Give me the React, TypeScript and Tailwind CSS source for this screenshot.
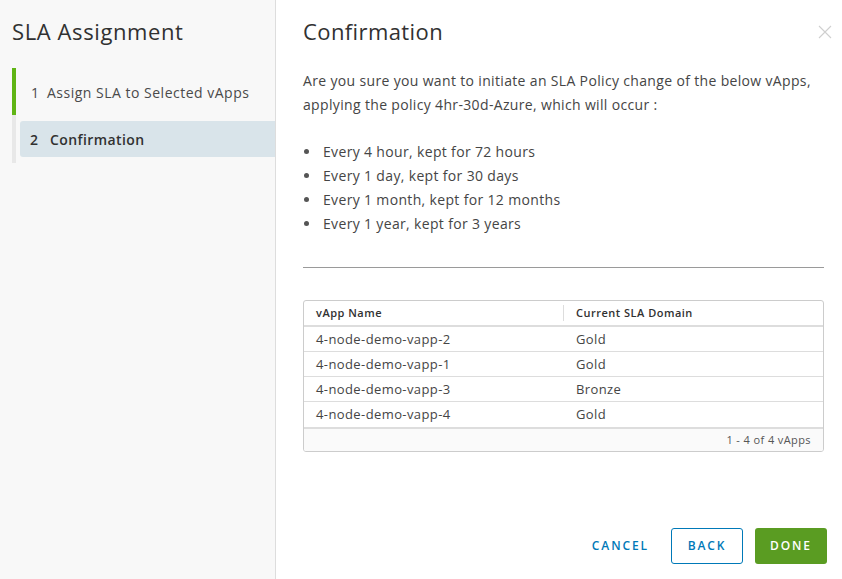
import React from "react";

const rows = [
  ["4-node-demo-vapp-2", "Gold"],
  ["4-node-demo-vapp-1", "Gold"],
  ["4-node-demo-vapp-3", "Bronze"],
  ["4-node-demo-vapp-4", "Gold"],
];

const bullets = [
  "Every 4 hour, kept for 72 hours",
  "Every 1 day, kept for 30 days",
  "Every 1 month, kept for 12 months",
  "Every 1 year, kept for 3 years",
];

export default function App() {
  return (
    <div
      className="flex w-[842px] h-[579px] bg-white text-[#333] overflow-hidden"
      style={{ fontFamily: '"Open Sans", "Noto Sans", sans-serif' }}
    >
      {/* Left panel */}
      <div className="w-[276px] shrink-0 bg-[#f8f8f8] border-r border-[#ddd] flex flex-col">
        <div className="pl-[12px] pt-[16px] h-[68px] text-[22px] leading-[30px] tracking-[0.6px] text-[#313131] font-normal">
          SLA Assignment
        </div>
        <div className="flex flex-col pl-[12px]">
          <div className="flex">
            <div className="w-[4px] bg-[#60b515]" />
            <div className="flex items-center h-[47px] pt-[1px] pl-[15px] text-[14px] tracking-[0.5px] text-[#4a4a4a]">
              <span className="w-[16px]">1</span>
              <span>Assign SLA to Selected vApps</span>
            </div>
          </div>
          <div className="flex">
            <div className="w-[4px] bg-[#e8e8e8]" />
            <div className="flex-1 pt-[6px] pb-[6px] pl-[4px]">
              <div className="flex items-center h-[36px] bg-[#d9e4ea] rounded-l-[3px] pl-[10px] text-[14px] tracking-[0.4px] text-[#313131] font-semibold">
                <span className="w-[20px]">2</span>
                <span>Confirmation</span>
              </div>
            </div>
          </div>
        </div>
      </div>

      {/* Right panel */}
      <div className="flex-1 min-w-0 flex flex-col pl-[27px] pr-[17px]">
        <div className="flex items-start justify-between pt-[16px]">
          <div className="text-[22px] leading-[30px] tracking-[0.4px] text-[#313131]">Confirmation</div>
          <svg width="14" height="14" viewBox="0 0 14 14" className="mt-[9px] -mr-[7px]">
            <path d="M1 1L13 13M13 1L1 13" stroke="#cfcfcf" strokeWidth="1.1" />
          </svg>
        </div>

        <p className="mt-[23px] text-[14px] leading-[24px] tracking-[0.34px] text-[#454545] whitespace-nowrap">
          Are you sure you want to initiate an SLA Policy change of the below vApps,
          <br />
          applying the policy 4hr-30d-Azure, which will occur :
        </p>

        <ul className="mt-[22px] flex flex-col">
          {bullets.map((b) => (
            <li key={b} className="flex items-center h-[24px] text-[14px] tracking-[0.34px] text-[#454545]">
              <span className="w-[5px] h-[5px] rounded-full bg-[#555] ml-[1px] mr-[14px]" />
              {b}
            </li>
          ))}
        </ul>

        <div className="mt-[32px] mr-[1px] h-px bg-[#9a9a9a]" />

        <div className="mt-[32px] mr-[1px] border border-[#ccc] rounded-[3px] overflow-hidden text-[13px] tracking-[0.4px]">
          <div className="flex h-[26px] items-center border-b-2 border-[#ddd] text-[11px] tracking-[0.5px] font-semibold text-[#313131]">
            <div className="w-[260px] pl-[12px] border-r border-[#ddd] h-[16px] flex items-center">vApp Name</div>
            <div className="pl-[12px]">Current SLA Domain</div>
          </div>
          {rows.map(([n, d], i) => (
            <div
              key={n}
              className={`flex h-[25px] pt-[1px] items-center text-[#454545] ${i < rows.length - 1 ? "border-b border-[#ddd]" : ""}`}
            >
              <div className="w-[260px] pl-[12px]">{n}</div>
              <div className="pl-[12px]">{d}</div>
            </div>
          ))}
          <div className="h-[24px] flex items-center justify-end pr-[12px] bg-[#fafafa] border-t-2 border-[#ddd] text-[11px] tracking-[0.4px] text-[#565656]">
            1 - 4 of 4 vApps
          </div>
        </div>

        <div className="mt-auto mb-[15px] flex justify-end items-center gap-[12px]">
          <button className="h-[36px] px-[10px] text-[12px] font-semibold tracking-[1.9px] text-[#0079b8]">
            CANCEL
          </button>
          <button className="h-[36px] w-[72px] border border-[#0079b8] rounded-[3px] text-[12px] font-semibold tracking-[1.9px] text-[#0079b8]">
            BACK
          </button>
          <button className="h-[36px] w-[72px] bg-[#5a9c22] rounded-[3px] text-[12px] font-semibold tracking-[1.9px] text-white -mr-[2px]">
            DONE
          </button>
        </div>
      </div>
    </div>
  );
}
